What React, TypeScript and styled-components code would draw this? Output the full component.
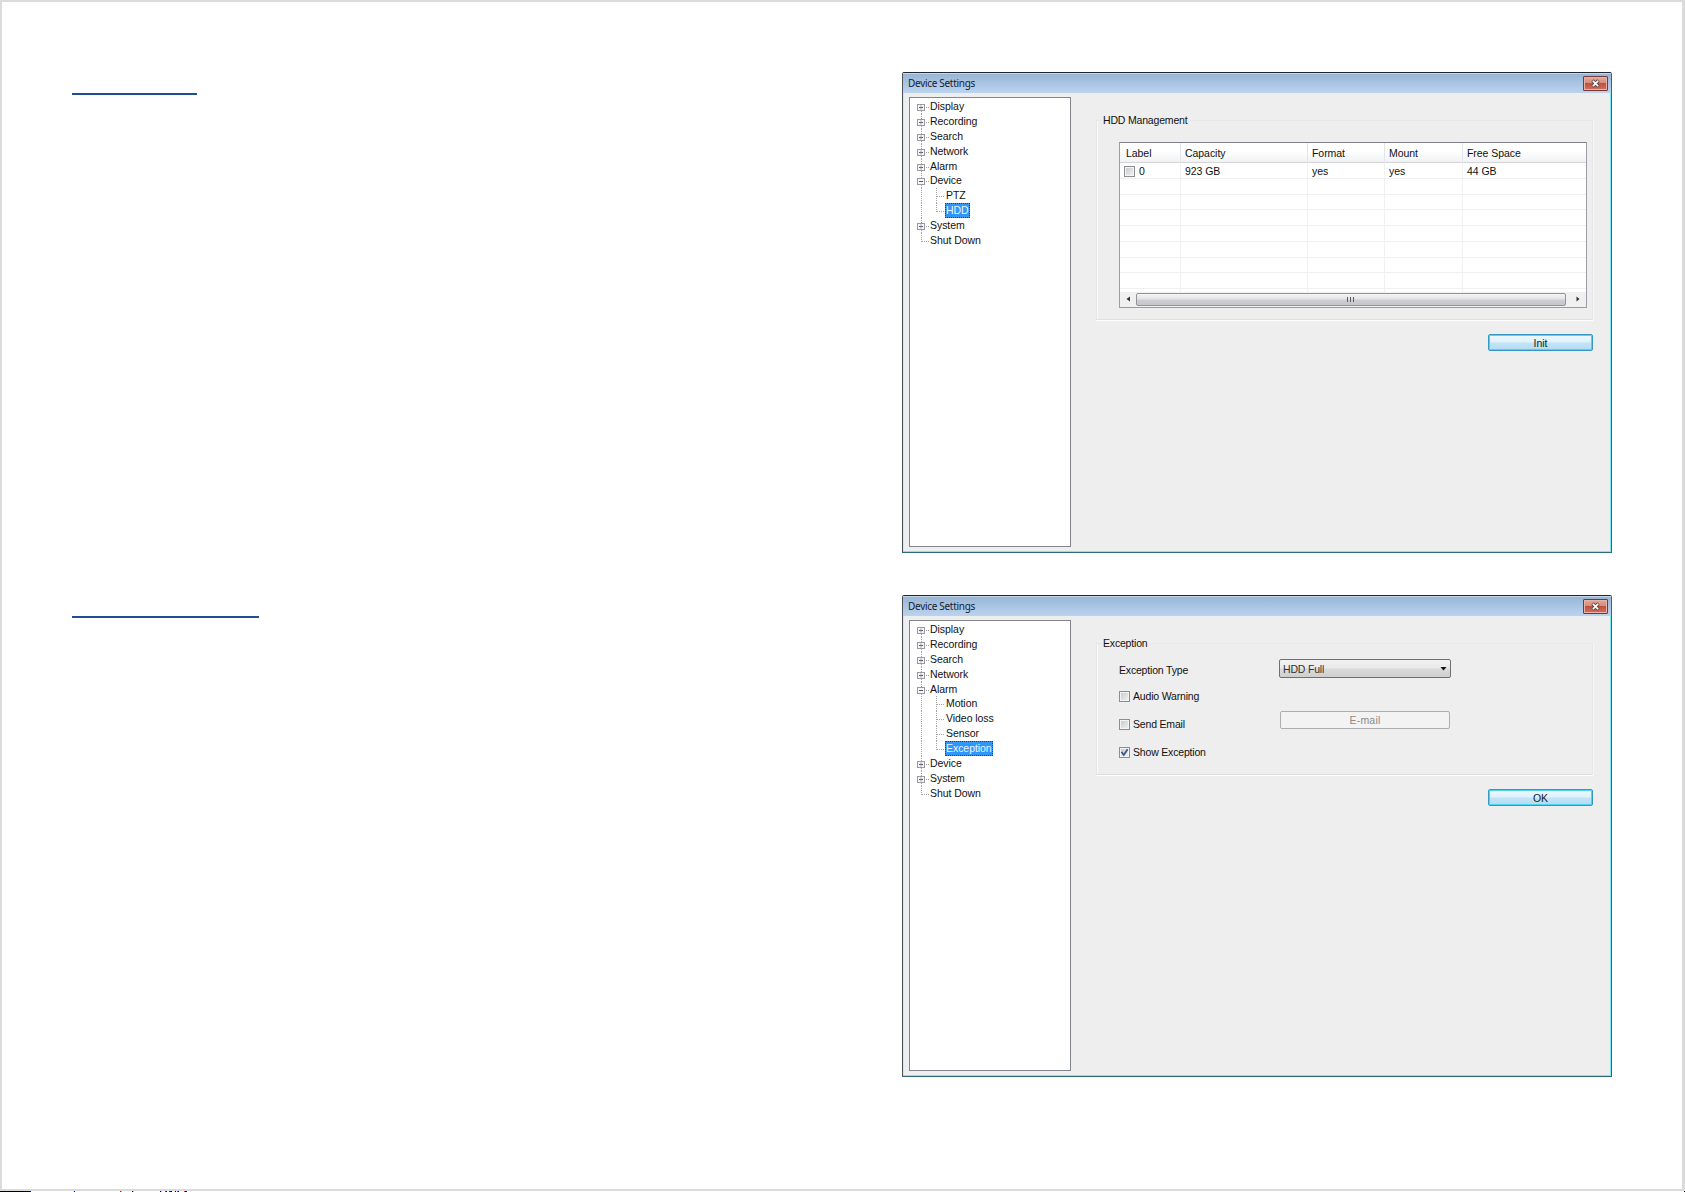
import React from 'react';
import styled, { createGlobalStyle } from 'styled-components';

const GlobalStyle = createGlobalStyle`
  * { box-sizing: border-box; }
  body { margin: 0; background: #fff; }
  #root { width: 1685px; height: 1192px; overflow: hidden; }
`;

const Sheet = styled.div`
  display: flex;
  flex-direction: column;
  width: 1685px;
  height: 1192px;
  font-family: 'Liberation Sans', Arial, sans-serif;
  font-size: 10.5px;
  color: #111;
`;

const Page = styled.main`
  flex: none;
  height: 1191px;
  border: solid #dbdbdb;
  border-width: 2px 3px 2px 2px;
  padding: 70px 70px 0 70px;
  display: flex;
  flex-direction: column;
  gap: 42px;
`;

const FootStrip = styled.div`
  height: 1px;
  background: linear-gradient(
    to right,
    #000 30px, #0000c0 30px 31px, #fff 31px 73px, #ffff90 73px 74px, #0000b0 74px 75px, #fff 75px 120px,
    #a02020 120px 121px, #60d8c8 121px 122px, #fff 122px 132px, #000 132px 133px, #90e0d0 133px 134px, #fff 134px 160px,
    #000 160px 161px, #80d8d0 161px 162px, #fff 162px 165px, #c02000 165px 166px, #0000c0 166px 167px, #fff 167px 169px,
    #b02000 169px 170px, #0000a0 170px 171px, #000 171px 172px, #fff 172px 174px, #ffff60 174px 175px, #000 175px 176px,
    #fff 176px 177px, #c04000 177px 178px, #0000c0 178px 179px, #fff 179px 184px, #d03000 184px 185px, #000 185px 186px,
    #0000b0 186px 187px, #fff 187px 1684px, #000 1684px
  );
`;

const Section = styled.section`
  display: flex;
  justify-content: space-between;
  align-items: flex-start;
`;

const HeadingRule = styled.hr<{ $width: number }>`
  width: ${(p) => p.$width}px;
  height: 2px;
  margin: 21px 0 0;
  border: 0;
  background: #1f4e91;
`;

const Window = styled.div<{ $height: number }>`
  width: 710px;
  height: ${(p) => p.$height}px;
  display: flex;
  flex-direction: column;
  border: 1px solid #2c6c7c;
  border-top-color: #20262e;
  border-left-color: #4a5058;
  border-radius: 2px 2px 0 0;
  background: #eee;
  box-shadow: inset -1px -1px 0 #7fe6f4, inset 1px 0 0 #d4e4f4;
`;

const TitleBar = styled.header`
  flex: none;
  height: 20px;
  display: flex;
  justify-content: space-between;
  align-items: center;
  padding: 1px 3px 1px 5px;
  border-top: 1px solid #c9d8e8;
  background: linear-gradient(#97b5d5, #a8c4e3 45%, #bbd3ee);
`;

const Title = styled.span`
  font-family: 'Noto Sans', 'Open Sans', sans-serif;
  font-size: 10px;
  line-height: 17px;
  letter-spacing: -0.3px;
  color: #16202c;
`;

const CloseButton = styled.button`
  width: 25px;
  height: 15px;
  padding: 0;
  display: flex;
  align-items: center;
  justify-content: center;
  border: 1px solid #6e3a3a;
  border-radius: 1px;
  background: linear-gradient(#e3a89c, #d98c7e 45%, #c0503c 50%, #d4705e);
  box-shadow: inset 0 0 0 1px #e8b2a8;
`;

const Body = styled.div`
  flex: 1;
  display: flex;
  gap: 25px;
  padding: 4px 0 5px 6px;
  min-height: 0;
`;

const Tree = styled.ul`
  width: 162px;
  margin: 0;
  padding: 1px 0 0 7px;
  list-style: none;
  border: 1px solid #82858a;
  background: #fff;
`;

const TreeRow = styled.li`
  display: flex;
  height: 14.9px;
  align-items: center;
`;

const TreeLabel = styled.span<{ $selected?: boolean }>`
  height: 15px;
  line-height: 15px;
  padding: 0 1px;
  letter-spacing: -0.05px;
  white-space: nowrap;
  ${(p) =>
    p.$selected &&
    `color: #e8f4ff; background: #3097fa; outline: 1px dotted #23405e; outline-offset: -1px;`}
`;

const Pane = styled.div`
  display: flex;
  flex-direction: column;
  align-items: flex-start;
  padding-top: 16px;
  letter-spacing: -0.18px;
`;

const Group = styled.fieldset<{ $height: number }>`
  width: 497px;
  height: ${(p) => p.$height}px;
  margin: 0;
  padding: 0 0 0 22px;
  border: 1px solid #dedede;
  border-left-color: #e6e6e6;
  border-right-color: #e8e8e8;
  border-top-color: #e8e8e8;
  box-shadow: inset 1px 0 0 #fafafa, 0 1px 0 #fff, 1px 0 0 #f6f6f6;
`;

const Legend = styled.legend`
  margin-left: -17px;
  padding: 0 2px 0 1px;
  line-height: 14px;
  background: #eee;
`;

const Table = styled.div`
  width: 468px;
  height: 166px;
  margin-top: 15px;
  display: flex;
  flex-direction: column;
  border: 1px solid #9a9da2;
  border-top-color: #7d8086;
  background: #fff;
  letter-spacing: -0.05px;
`;

const columns = '61px 127px 77px 78px 1fr';

const HeadRow = styled.div`
  flex: none;
  display: grid;
  grid-template-columns: ${columns};
  height: 20px;
  border-bottom: 1px solid #d5d5d8;
  background: linear-gradient(#fff 40%, #f1f2f4);
`;

const HeadCell = styled.span`
  padding: 1px 0 0 4px;
  line-height: 19px;
  border-right: 1px solid #e3e5ea;
  &:first-child { padding-left: 6px; }
  &:last-child { border-right: 0; }
`;

const Rows = styled.div`
  flex: 1;
  overflow: hidden;
`;

const Row = styled.div`
  display: grid;
  grid-template-columns: ${columns};
  height: 15.75px;
  border-bottom: 1px solid #efefef;
`;

const Cell = styled.span`
  display: flex;
  align-items: center;
  gap: 4px;
  padding: 1px 0 0 4px;
  line-height: 14px;
  border-right: 1px solid #f1f1f1;
  &:last-child { border-right: 0; }
`;

const ScrollBar = styled.div`
  flex: none;
  height: 15px;
  display: grid;
  grid-template-columns: 16px 430px 1fr;
  align-items: center;
  justify-items: center;
  padding-bottom: 1px;
  background: #f0f0f1;
`;

const Thumb = styled.div`
  width: 100%;
  height: 13px;
  display: flex;
  align-items: center;
  justify-content: center;
  padding-right: 3px;
  border: 1px solid #939498;
  border-radius: 2px;
  background: linear-gradient(#f4f4f5, #e4e4e6 45%, #cfcfd3 55%, #c4c4ca);
`;

const CheckBox = styled.span`
  flex: none;
  width: 11px;
  height: 11px;
  display: flex;
  align-items: center;
  justify-content: center;
  border: 1px solid #8b8e92;
  background: linear-gradient(135deg, #c4c6c9, #f5f5f5);
  box-shadow: inset 0 0 0 1px #f4f4f4;
`;

const ActionButton = styled.button`
  width: 105px;
  height: 17px;
  margin: 14px 0 0 392px;
  padding: 0;
  font: inherit;
  line-height: 14px;
  color: #122;
  border: 1px solid #3399c4;
  border-radius: 2px;
  background: linear-gradient(#eef8fd, #dff1fb 48%, #c2e4f6 52%, #b3dcf2);
  box-shadow: inset 0 0 0 1px #4cd3f6;
`;

const Form = styled.div`
  display: grid;
  grid-template-columns: 160px 172px;
  grid-template-rows: 26px 26px 30px 26px;
  align-items: center;
  padding-top: 7px;
`;

const FieldLabel = styled.label`
  display: flex;
  align-items: center;
  gap: 3px;
  line-height: 15px;
  white-space: nowrap;
`;

const Select = styled.div`
  width: 172px;
  height: 19px;
  margin-top: -3px;
  display: flex;
  align-items: center;
  justify-content: space-between;
  padding: 0 3px 0 3px;
  border: 1px solid #707070;
  border-radius: 2px;
  color: #333;
  background: linear-gradient(#f3f3f3, #e9e9e9 48%, #dbdbdb 52%, #cfcfcf);
`;

const EmailButton = styled.button`
  width: 170px;
  height: 18px;
  margin: -9px 0 0 1px;
  padding: 0;
  font: inherit;
  letter-spacing: 0.2px;
  color: #8a8a8a;
  border: 1px solid #acaeb1;
  border-radius: 2px;
  background: #f3f3f3;
`;

type Node = { label: string; state?: 'open' | 'closed'; child?: boolean; last?: boolean; selected?: boolean };

const Branch = ({ node, first }: { node: Node; first: boolean }) => {
  const dots = { stroke: '#a2a2a2', strokeDasharray: '1 1', fill: 'none' };
  const end = node.label === 'Shut Down';
  const width = node.child ? 28 : 12;
  return (
    <svg width={width} height="15" viewBox={`0 0 ${width} 15`}>
      <path {...dots} d={`M4.5 ${first ? 8 : 0}V${end ? 9 : 15}`} />
      {node.child ? (
        <path {...dots} d={`M19.5 0V${node.last ? 9 : 15}M20 8.5H27`} />
      ) : (
        <path {...dots} d="M5 8.5H12" />
      )}
      {node.state && (
        <>
          <rect x="0.5" y="5.5" width="7" height="6" fill="#f6f6f8" stroke="#999ba0" />
          <path d="M2 8.5H6" stroke="#4d5a76" />
          {node.state === 'closed' && <path d="M4 6.5V10.5" stroke="#8a93a6" />}
        </>
      )}
    </svg>
  );
};

const Check = () => (
  <svg width="9" height="9" viewBox="0 0 9 9">
    <path d="M1.5 3.8L3.8 7L7.6 1.3" fill="none" stroke="#3c5a92" strokeWidth="1.8" />
  </svg>
);

const DeviceWindow = ({ nodes, height, children }: { nodes: Node[]; height: number; children: React.ReactNode }) => (
  <Window $height={height}>
    <TitleBar>
      <Title>Device Settings</Title>
      <CloseButton aria-label="Close">
        <svg width="11" height="9" viewBox="0 0 11 9">
          <path d="M2.5 1.5L8.5 7.5M8.5 1.5L2.5 7.5" stroke="#5a4546" strokeWidth="3.4" />
          <path d="M2.9 1.9L8.1 7.1M8.1 1.9L2.9 7.1" stroke="#fff" strokeWidth="1.7" />
        </svg>
      </CloseButton>
    </TitleBar>
    <Body>
      <Tree>
        {nodes.map((node, i) => (
          <TreeRow key={node.label}>
            <Branch node={node} first={i === 0} />
            <TreeLabel $selected={node.selected}>{node.label}</TreeLabel>
          </TreeRow>
        ))}
      </Tree>
      <Pane>{children}</Pane>
    </Body>
  </Window>
);

const hddNodes: Node[] = [
  { label: 'Display', state: 'closed' },
  { label: 'Recording', state: 'closed' },
  { label: 'Search', state: 'closed' },
  { label: 'Network', state: 'closed' },
  { label: 'Alarm', state: 'closed' },
  { label: 'Device', state: 'open' },
  { label: 'PTZ', child: true },
  { label: 'HDD', child: true, last: true, selected: true },
  { label: 'System', state: 'closed' },
  { label: 'Shut Down' },
];

const alarmNodes: Node[] = [
  { label: 'Display', state: 'closed' },
  { label: 'Recording', state: 'closed' },
  { label: 'Search', state: 'closed' },
  { label: 'Network', state: 'closed' },
  { label: 'Alarm', state: 'open' },
  { label: 'Motion', child: true },
  { label: 'Video loss', child: true },
  { label: 'Sensor', child: true },
  { label: 'Exception', child: true, last: true, selected: true },
  { label: 'Device', state: 'closed' },
  { label: 'System', state: 'closed' },
  { label: 'Shut Down' },
];

const emptyRows = Array.from({ length: 8 }, (_, i) => i);

export default function App() {
  return (
    <>
      <GlobalStyle />
      <Sheet>
        <Page>
          <Section>
            <HeadingRule $width={125} />
            <DeviceWindow nodes={hddNodes} height={481}>
              <Group $height={207}>
                <Legend>HDD Management</Legend>
                <Table>
                  <HeadRow>
                    {['Label', 'Capacity', 'Format', 'Mount', 'Free Space'].map((h) => (
                      <HeadCell key={h}>{h}</HeadCell>
                    ))}
                  </HeadRow>
                  <Rows>
                    <Row>
                      <Cell><CheckBox />0</Cell>
                      <Cell>923 GB</Cell>
                      <Cell>yes</Cell>
                      <Cell>yes</Cell>
                      <Cell>44 GB</Cell>
                    </Row>
                    {emptyRows.map((r) => (
                      <Row key={r}><Cell /><Cell /><Cell /><Cell /><Cell /></Row>
                    ))}
                  </Rows>
                  <ScrollBar>
                    <svg width="4" height="6" viewBox="0 0 4 6"><path d="M4 0.5V5.5L0.5 3Z" fill="#333" /></svg>
                    <Thumb>
                      <svg width="8" height="5" viewBox="0 0 8 5">
                        <path d="M1.5 0V5M4.5 0V5M7.5 0V5" stroke="#5a5a60" />
                      </svg>
                    </Thumb>
                    <svg width="8" height="6" viewBox="0 0 8 6"><path d="M4.5 0.5V5.5L7.5 3Z" fill="#333" /></svg>
                  </ScrollBar>
                </Table>
              </Group>
              <ActionButton>Init</ActionButton>
            </DeviceWindow>
          </Section>
          <Section>
            <HeadingRule $width={187} />
            <DeviceWindow nodes={alarmNodes} height={482}>
              <Group $height={139}>
                <Legend>Exception</Legend>
                <Form>
                  <FieldLabel>Exception Type</FieldLabel>
                  <Select>
                    HDD Full
                    <svg width="7" height="4" viewBox="0 0 7 4"><path d="M0.5 0H6.5L3.5 3.5Z" fill="#111" /></svg>
                  </Select>
                  <FieldLabel><CheckBox />Audio Warning</FieldLabel>
                  <span />
                  <FieldLabel><CheckBox />Send Email</FieldLabel>
                  <EmailButton>E-mail</EmailButton>
                  <FieldLabel><CheckBox><Check /></CheckBox>Show Exception</FieldLabel>
                </Form>
              </Group>
              <ActionButton>OK</ActionButton>
            </DeviceWindow>
          </Section>
        </Page>
        <FootStrip />
      </Sheet>
    </>
  );
}
